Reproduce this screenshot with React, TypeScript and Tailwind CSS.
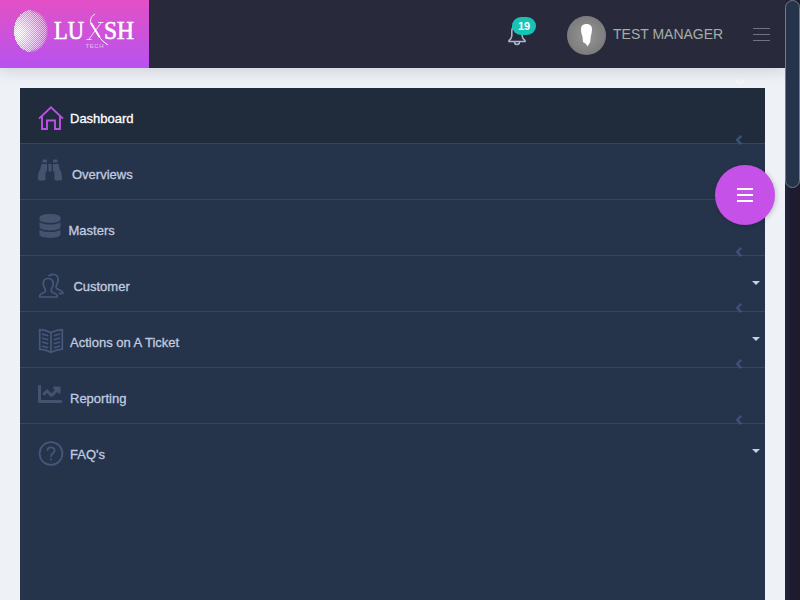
import type { ReactNode } from "react";
import { FaBinoculars, FaChartLine, FaDatabase } from "react-icons/fa";

function buildGlobe() {
  const dots: { x: number; y: number; o: number }[] = [];
  for (let y = 10; y < 52; y++) {
    for (let x = 14; x < 48; x++) {
      const dx = (x + 0.5 - 31) / 17;
      const dy = (y + 0.5 - 31) / 21;
      const d2 = dx * dx + dy * dy;
      if (d2 > 1) continue;
      const fade = Math.hypot((x - 18) / 32, (y - 33) / 36);
      const edge = dx > 0 ? Math.min(1, (1.08 - d2) * 3) : 1;
      const on = (x + y) % 2 === 0;
      const o = (on ? 1.05 - fade * 0.55 : 0.75 - fade * 0.8) * edge;
      if (o > 0.04) dots.push({ x, y, o: Math.min(1, o) });
    }
  }
  return dots;
}

const globe = buildGlobe();

function Logo() {
  return (
    <svg width="149" height="68" viewBox="0 0 149 68" fill="#fff">
      {globe.map((d, i) => (
        <rect key={i} x={d.x} y={d.y} width="1" height="1" opacity={d.o} />
      ))}
      <g fontFamily="'Liberation Serif', serif" fontSize="25.5" stroke="#fff" strokeWidth="0.6">
        <text x="54" y="39.4" textLength="30" lengthAdjust="spacingAndGlyphs">LU</text>
        <text x="104" y="39.4" textLength="30" lengthAdjust="spacingAndGlyphs">SH</text>
      </g>
      <g fill="none" stroke="#fff">
        <path d="M95 14C90 17 89.5 21 92 26" strokeWidth="0.9" />
        <path d="M91 23L99.5 37" strokeWidth="2" />
        <path d="M99 36.5Q102 41.5 108 45" strokeWidth="1" />
        <path d="M101 23L89 39M86.5 39.5H91.5M98 22.5H103.5" strokeWidth="0.8" />
      </g>
      <text x="85.5" y="47.8" fontSize="6" textLength="18" fontFamily="'Liberation Sans', sans-serif" opacity="0.6">TECH</text>
    </svg>
  );
}

function Line({ children, color = "#46577b", width = 1.7 }: { children: ReactNode; color?: string; width?: number }) {
  return (
    <svg width="26" height="26" viewBox="0 0 26 26" fill="none" stroke={color} strokeWidth={width}>
      {children}
    </svg>
  );
}

const HomeIcon = () => (
  <Line color="#bd50e6" width={1.9}>
    <path d="M1 13.6L13 2.2L25 13.6M4 11.5V24H9V15.5H17V24H22V11.5" />
  </Line>
);

const UsersIcon = () => (
  <Line>
    <path d="M10.2 5.5C13.8 5.5 15.6 7.8 15.1 11.5C14.8 14 13.6 15.3 13.3 16.5V18.4C14 20.2 19 20 19.3 23V24H1.7V23C2 20 6.7 20.2 7.3 18.4V16.5C6.8 15.3 5.6 14 5.4 11.5C4.9 7.8 6.6 5.5 10.2 5.5Z" />
    <path d="M10.5 3.3C12 1.4 14 1.1 16 1.5C19.3 2 20.5 4.6 20 7.8C19.7 10.3 18.5 11.6 18.1 13V14.9C18.8 16.7 24.2 16.9 24.8 19.7V20.5H20.5" />
  </Line>
);

const BookIcon = () => (
  <Line>
    <path d="M13 4.5Q7 2 1.7 1.7V21.2Q7.5 21.5 13 24.2Q18.5 21.5 24.3 21.2V1.7Q19 2 13 4.5ZM13 4.5V24.2" />
    <path d="M4 6L10.2 7.8M4 10L10.2 11.8M4 14L10.2 15.8M4 18L10.2 19.8M22 6L15.8 7.8M22 10L15.8 11.8M22 14L15.8 15.8M22 18L15.8 19.8" strokeWidth="1.5" />
  </Line>
);

const HelpIcon = () => (
  <Line>
    <circle cx="13" cy="12.5" r="11.4" />
    <path d="M9.4 9.8Q9.4 6.3 13 6.3Q16.6 6.3 16.6 9.5Q16.6 11 14.8 12.5Q13 13.8 13 15.7M13 17.5V19.5" />
  </Line>
);

type Item = { label: string; icon: ReactNode; iconPad: string; textPad: string; arrow: boolean; caret: boolean };

const items: Item[] = [
  { label: "Dashboard", icon: <HomeIcon />, iconPad: "pl-[18px] pt-[17px]", textPad: "pl-[50px]", arrow: true, caret: false },
  { label: "Overviews", icon: <FaBinoculars size={24} />, iconPad: "pl-[18px] pt-[14px]", textPad: "pl-[52px]", arrow: false, caret: false },
  { label: "Masters", icon: <FaDatabase size={24} />, iconPad: "pl-[18px] pt-[14px]", textPad: "pl-[48.5px]", arrow: true, caret: false },
  { label: "Customer", icon: <UsersIcon />, iconPad: "pl-[18px] pt-[17px]", textPad: "pl-[53.4px]", arrow: true, caret: true },
  { label: "Actions on A Ticket", icon: <BookIcon />, iconPad: "pl-[18px] pt-[16px]", textPad: "pl-[50px]", arrow: true, caret: true },
  { label: "Reporting", icon: <FaChartLine size={24} />, iconPad: "pl-[18px] pt-[14px]", textPad: "pl-[50px]", arrow: true, caret: false },
  { label: "FAQ's", icon: <HelpIcon />, iconPad: "pl-[18px] pt-[17px]", textPad: "pl-[50px]", arrow: false, caret: true },
];

function Row({ item, index }: { item: Item; index: number }) {
  const active = index === 0;
  const last = index === items.length - 1;
  return (
    <li
      className={`relative grid h-14 ${active ? "bg-[#202b3c] text-white" : "text-[#c0cbe0]"} ${last ? "" : "border-b border-[#334668]"}`}
    >
      <span className={`col-start-1 row-start-1 text-[#46536f] ${item.iconPad}`}>{item.icon}</span>
      <span
        className={`col-start-1 row-start-1 pt-[21px] text-[13px] leading-5 [-webkit-text-stroke:0.3px_currentColor] ${item.textPad}`}
      >
        {item.label}
      </span>
      {item.arrow && (
        <svg className="absolute right-[22px] top-[47px]" width="8" height="10" viewBox="0 0 8 10" fill="none" stroke="#3d5079" strokeWidth="2.5">
          <path d="M6.3 0.8L2.2 5L6.3 9.2" />
        </svg>
      )}
      {item.caret && (
        <svg className="absolute right-[5px] top-[25px]" width="8" height="4" viewBox="0 0 8 4" fill="#c5d0e6">
          <path d="M0 0H8L4 4Z" />
        </svg>
      )}
    </li>
  );
}

export default function App() {
  return (
    <div className="flex h-[600px] w-[800px] overflow-hidden bg-[#eef1f6] font-['Liberation_Sans',Arial,sans-serif]">
      <div className="flex w-[785px] flex-col">
        <header className="flex h-[68px] shrink-0 bg-[#282a3c] shadow-[0_1px_15px_1px_rgba(69,65,78,0.2)]">
          <div className="h-[68px] w-[149px] bg-linear-to-b from-[#e34fc6] to-[#b751ef]">
            <Logo />
          </div>
          <div className="flex flex-1 items-center">
            <div className="relative ml-[358px] h-[68px] w-[30px]">
              <svg className="mt-[23px]" width="20" height="24" viewBox="0 0 20 24" fill="none" stroke="#aeb9ce" strokeWidth="1.5">
                <path d="M10 3Q4.8 3 4.8 8V13Q4.5 16 2 17.5V18.5H18V17.5Q15.5 16 15.2 13V8Q15.2 3 10 3ZM7.5 19Q7.5 21.5 10 21.5Q12.5 21.5 12.5 19" />
              </svg>
              <span className="absolute left-[5px] top-[17px] flex h-[18px] w-6 items-center justify-center rounded-full bg-[#17c3b5] text-[11px] font-bold leading-none text-white">
                19
              </span>
            </div>
            <svg className="ml-[30px] mt-[3px]" width="39" height="39" viewBox="0 0 39 39">
              <defs>
                <radialGradient id="avatar">
                  <stop offset="0" stopColor="#969696" />
                  <stop offset="1" stopColor="#7c7c7c" />
                </radialGradient>
              </defs>
              <circle cx="19.5" cy="19.5" r="19.5" fill="url(#avatar)" />
              <path d="M19.5 8C23.5 8 25 10.3 25 13.5C25 16 24.3 18 23.8 20.5L23.2 26L20.6 30.5L19 28L16 26L15.5 20.5C14.6 18 14 16 14 13.5C14 10.3 15.5 8 19.5 8Z" fill="#fff" />
            </svg>
            <span className="ml-[7px] w-[112px] whitespace-nowrap text-sm text-[#a5ada8]">TEST MANAGER</span>
            <div className="ml-[28px] mt-px flex w-[17px] flex-col gap-[5px]">
              <span className="h-px bg-[#717480]" />
              <span className="h-px bg-[#717480]" />
              <span className="h-px bg-[#717480]" />
            </div>
          </div>
        </header>
        <main className="relative flex-1 px-5 pt-5">
          <svg className="absolute left-[735px] top-[11px]" width="10" height="7" viewBox="0 0 10 7" fill="none" stroke="#f5f5f6" strokeWidth="2.5">
            <path d="M1 1L5 5L9 1" />
          </svg>
          <ul className="h-full bg-[#26344b]">
            {items.map((item, i) => (
              <Row key={item.label} item={item} index={i} />
            ))}
          </ul>
          <button
            aria-label="Menu"
            className="absolute left-[715px] top-[97px] flex h-[60px] w-[60px] flex-col items-center justify-center gap-1 rounded-full bg-[#c551e8] shadow-[1px_1px_5px_rgba(0,0,0,0.2)]"
          >
            <span className="h-0.5 w-4 bg-white" />
            <span className="h-0.5 w-4 bg-white" />
            <span className="h-0.5 w-4 bg-white" />
          </button>
        </main>
      </div>
      <div className="h-full w-[15px] bg-linear-to-r from-[#232640] to-[#1e1b2e] to-40%">
        <div className="h-[188px] rounded-[8px] border border-[#747b84] bg-[#26344b]" />
      </div>
    </div>
  );
}
